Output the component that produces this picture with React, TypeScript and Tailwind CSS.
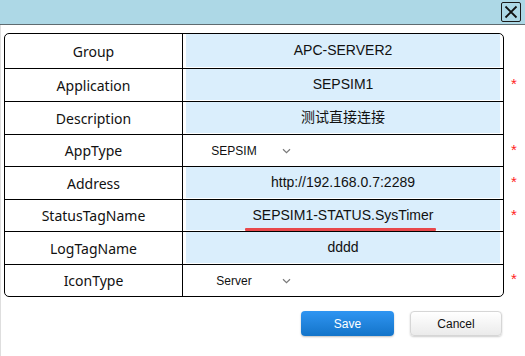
import React from 'react';

type Row = {
  label: string;
  value: string;
  kind: 'input' | 'select';
  required: boolean;
  h: string;
};

const rows: Row[] = [
  { label: 'Group', value: 'APC-SERVER2', kind: 'input', required: false, h: 'h-[35px]' },
  { label: 'Application', value: 'SEPSIM1', kind: 'input', required: true, h: 'h-[33px]' },
  { label: 'Description', value: '测试直接连接', kind: 'input', required: false, h: 'h-[33px]' },
  { label: 'AppType', value: 'SEPSIM', kind: 'select', required: true, h: 'h-[32px]' },
  { label: 'Address', value: 'http://192.168.0.7:2289', kind: 'input', required: true, h: 'h-[33px]' },
  { label: 'StatusTagName', value: 'SEPSIM1-STATUS.SysTimer', kind: 'input', required: true, h: 'h-[32px]' },
  { label: 'LogTagName', value: 'dddd', kind: 'input', required: false, h: 'h-[33px]' },
  { label: 'IconType', value: 'Server', kind: 'select', required: true, h: 'h-[31px]' },
];

function Chevron() {
  return (
    <svg width="9" height="6" viewBox="0 0 9 6" className="shrink-0">
      <path d="M1 1.2 L4.5 4.6 L8 1.2" fill="none" stroke="#7a7a7a" strokeWidth="1.2" />
    </svg>
  );
}

function ValueCell({ row }: { row: Row }) {
  if (row.kind === 'select') {
    return (
      <div className="flex items-center h-full pl-[3px] font-['Liberation_Sans',Arial,sans-serif] text-[12px] text-[#111]">
        <span className="w-[96px] text-center">{row.value}</span>
        <Chevron />
      </div>
    );
  }
  const isStatus = row.label === 'StatusTagName';
  return (
    <div className="relative h-full px-[3px] pb-[1px]">
      <div className="h-full bg-[#daeefc] flex items-center justify-center font-['Liberation_Sans','Noto_Sans_CJK_SC',Arial,sans-serif] text-[14px] text-[#111]">
        {row.value}
      </div>
      {isStatus && (
        <div className="absolute left-[62px] top-[28px] w-[191px] h-[3px] rounded-[1px] bg-[#e8484b]" />
      )}
    </div>
  );
}

export default function App() {
  return (
    <div className="w-[525px] h-[356px] bg-white overflow-hidden">
      <div className="h-[25px] bg-[#add8e6] border-b border-[#5f6b70] flex justify-end pr-[4px] pt-[2px]">
        <button className="w-[20px] h-[20px] border-[1.5px] border-[#1a1a1a] rounded-[2px] flex items-center justify-center">
          <svg width="14" height="14" viewBox="0 0 14 14">
            <path d="M1.5 1.5 L12.5 12.5 M12.5 1.5 L1.5 12.5" stroke="#111" strokeWidth="1.8" />
          </svg>
        </button>
      </div>

      <div className="h-[331px] border-l border-[#dedede] pl-[3px] pt-[8px]">
        <div className="flex">
          <div className="w-[500px] border border-black rounded-[5px] overflow-hidden">
            {rows.map((row, i) => (
              <div
                key={row.label}
                className={`flex ${row.h} ${i < rows.length - 1 ? 'border-b border-black' : ''}`}
              >
                <div className="w-[178px] shrink-0 border-r border-black flex items-center justify-center font-['Noto_Sans',sans-serif] text-[14px] text-[#111]">
                  {row.label}
                </div>
                <div className="flex-1">
                  <ValueCell row={row} />
                </div>
              </div>
            ))}
          </div>
          <div className="w-[20px] pt-[1px]">
            {rows.map((row) => (
              <div
                key={row.label}
                className={`${row.h} flex items-center pl-[7px] pb-[4px] font-['Liberation_Sans',Arial,sans-serif] text-[15px] text-[#f22] leading-none`}
              >
                {row.required ? '*' : ''}
              </div>
            ))}
          </div>
        </div>

        <div className="flex justify-end gap-[16px] pr-[23px] mt-[14px] font-['Liberation_Sans',Arial,sans-serif] text-[12px]">
          <button className="w-[93px] h-[25px] rounded-[4px] bg-gradient-to-b from-[#2f95f2] to-[#1274c9] text-white shadow-[0_1px_2px_rgba(0,0,0,0.25)]">
            Save
          </button>
          <button className="w-[92px] h-[25px] rounded-[4px] border border-[#d6d6d6] bg-gradient-to-b from-white to-[#ebebeb] text-[#111] shadow-[0_1px_2px_rgba(0,0,0,0.2)]">
            Cancel
          </button>
        </div>
      </div>
    </div>
  );
}
